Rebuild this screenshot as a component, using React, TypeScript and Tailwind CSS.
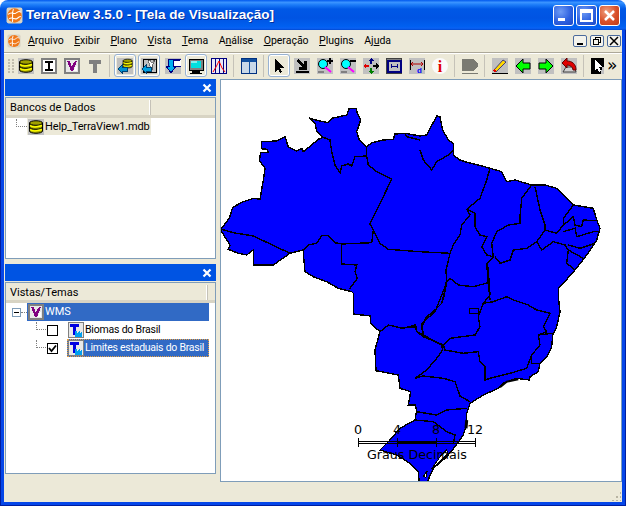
import type { ReactNode } from "react";

const ui = "font-['Roboto',sans-serif] text-[11px] text-black";

// map was traced from 3x crops, so points are crop coords with a crop origin
const at = (ox: number, oy: number, s: string) =>
  s
    .split(" ")
    .map((p) => {
      const [x, y] = p.split(",").map(Number);
      return `${(ox + x / 3).toFixed(1)},${(oy + y / 3).toFixed(1)}`;
    })
    .join(" ");

const outline = [
  at(220, 90, "5,415 8,410 28,385 38,352 70,335 100,325 120,328 130,270 135,235 118,212 122,188 145,187 140,178 124,176 124,155 170,153 195,140 205,170 230,183 245,175 250,185 275,165 295,148 310,142 290,125 285,100 268,84 295,92 325,98 335,85 380,75 388,55 408,55 412,70 422,90 410,125 418,150 440,170 455,158 490,150 520,148 525,132 555,130"),
  at(420, 100, "0,108 20,105 50,48 60,50 68,90 85,120 100,130 100,165 120,180 145,188 175,195 210,205 245,215 260,245 285,240 335,255 375,255 410,265 440,295 460,315 520,325 530,360 540,385 530,420 500,465 465,510 430,550 415,565"),
  at(400, 220, "475,230 480,275 470,320 458,345 455,380 440,410 420,430 415,455 390,470 388,480"),
  at(300, 280, "650,295 610,310 595,325 550,345 510,370 500,400 498,440 490,465 465,500 440,530 400,565 380,610 358,610 355,575 330,550 290,525 240,510 270,480 300,445 345,420 350,390 345,375 325,375 332,335 300,325 295,285 228,272 225,210 240,155 212,130 212,108 160,102 160,40"),
  at(300, 150, "155,425 115,415 80,395 40,380 15,365 10,310"),
  at(220, 90, "250,480 210,490 160,525 100,525 100,480 80,495 55,490 25,478 30,465 5,425"),
].join(" ");

const borders = [
  at(220, 90, "310,142 330,150 335,185 345,225 360,248 365,228 385,222 395,228 405,200 438,198"),
  at(220, 90, "440,170 440,200 445,225 470,245 515,268 450,402 460,420 455,458 365,462 345,458 325,437 305,437 290,460 265,465 250,480"),
  at(220, 90, "365,462 365,522 410,525 405,545 412,565 388,598"),
  at(220, 90, "5,418 40,428 100,438 210,490"),
  at(220, 90, "460,420 480,460 505,478 600,485"),
  at(220, 90, "555,130 560,140 600,150"),
  at(420, 100, "0,150 10,180 35,210 50,185 85,165 100,150"),
  at(420, 100, "210,205 200,240 180,295 140,328 165,340 165,380 180,405 200,410 185,440 200,465 220,470"),
  at(420, 100, "140,328 150,345 125,375 120,405 100,435 90,460 78,510 80,545 70,600"),
  at(420, 100, "0,455 90,460"),
  at(420, 100, "80,545 90,535 115,555 160,560 205,548 210,600"),
  at(420, 100, "335,255 305,295 300,350 300,370 265,375 230,395 215,430 220,470 200,490 205,548"),
  at(420, 100, "345,260 360,330 375,375 375,390 410,400 430,375 430,355 460,315"),
  at(420, 100, "375,390 350,425 320,445 280,450 270,480 240,490 225,470"),
  at(420, 100, "350,425 365,450 400,425 435,435 445,450 490,475"),
  at(420, 100, "430,395 465,385 470,410 520,395 535,395"),
  at(420, 100, "425,380 460,350 465,375 485,380 490,360 530,362"),
  at(420, 100, "445,435 480,445 525,430"),
  at(420, 100, "445,450 440,490 465,510"),
  at(400, 220, "265,150 270,225 250,250 235,290 240,320 225,345 150,355 130,375"),
  at(400, 220, "250,250 280,245 320,230 340,240 385,255 410,270 450,280 430,320 440,335 415,345 420,375 395,405 380,445 330,460 270,475 255,480 255,440 240,425 235,395 190,400 135,390 130,375"),
  at(400, 220, "208,265 235,265 235,280 208,280 208,265"),
  at(400, 220, "415,345 458,340"),
  at(400, 220, "395,405 395,430 420,430"),
  at(400, 220, "150,100 138,150 140,190 125,250 105,270 80,290 65,320 70,350 130,375"),
  at(400, 220, "0,325 50,320 50,335 70,350"),
  at(400, 220, "280,110 262,130 265,150"),
  at(300, 280, "345,295 370,288 430,295 465,305 480,348 510,365"),
  at(300, 280, "345,295 380,270 410,235 428,210"),
  at(300, 280, "428,210 425,195 370,165 365,130 405,95 435,20 440,0"),
  at(300, 280, "240,155 265,135 310,145 345,135 350,155 370,165"),
  at(300, 280, "350,395 410,405 440,390 500,385"),
  at(300, 280, "345,420 400,425 440,455 465,465 460,490"),
];

function BrazilMap() {
  return (
    <svg className="block" width={400} height={401} viewBox="221 80 400 401">
      <polygon points={outline} fill="#0000ff" stroke="#000" strokeWidth={1.4} shapeRendering="crispEdges" />
      {borders.map((b, i) => (
        <polyline key={i} points={b} fill="none" stroke="#000" strokeWidth={1.4} shapeRendering="crispEdges" />
      ))}
      <polygon points={at(300, 280, "400,560 420,530 440,510 445,520 420,545 395,567")} fill="#fff" stroke="#000" shapeRendering="crispEdges" />
      <polygon points={at(300, 280, "370,590 382,572 378,592")} fill="#fff" stroke="#000" shapeRendering="crispEdges" />
      <polyline points={at(300, 280, "600,322 620,305 655,298")} fill="none" stroke="#000" strokeWidth={2} />
      <polyline points={at(300, 280, "500,420 498,445")} fill="none" stroke="#000" strokeWidth={3} />
      {/* scale bar */}
      <g shapeRendering="crispEdges" stroke="#000">
        <path d="M358 441.5H475M358 443.5H475M397 442.5H437M358.5 438V447M397.5 438V447M436.5 438V447M475.5 438V447" fill="none" />
      </g>
      <g fontFamily="'DejaVu Sans', sans-serif" fontSize={12.7} fill="#000">
        <text x={354} y={434}>0</text>
        <text x={393} y={434}>4</text>
        <text x={432} y={434}>8</text>
        <text x={467} y={434}>12</text>
        <text x={367} y={459}>Graus Decimais</text>
      </g>
    </svg>
  );
}

function Ico({ children, bg = true }: { children: ReactNode; bg?: boolean }) {
  return (
    <svg width={16} height={16} viewBox="0 0 16 16" className="block shrink-0" shapeRendering="crispEdges">
      {bg && <rect width={16} height={16} fill="#c0c0c0" />}
      {children}
    </svg>
  );
}

const DbDiscs = () => (
  <g stroke="#000" fill="#ffff00" shapeRendering="auto">
    <path d="M1.5 4c0-3 13-3 13 0v8c0 3-13 3-13 0z" fill="#a0a000" />
    <path d="M1.5 4c0 3 13 3 13 0" fill="none" />
    <path d="M1.5 8c0 3 13 3 13 0" fill="none" />
    <path d="M2 6.5c2 1.500 6 2 12 0M2 10.500c2 1.500 6 2 12 0" fill="none" stroke="#ffff00" strokeWidth={1.5} />
  </g>
);

const IconDb = () => (
  <Ico><DbDiscs /></Ico>
);
const IconI = () => (
  <Ico>
    <rect width={16} height={16} fill="#808080" />
    <rect x={2} y={2} width={12} height={12} fill="#fff" />
    <path d="M4 3h8v2h-3v6h3v2H4v-2h3V5H4z" fill="#000" />
  </Ico>
);
const IconV = () => (
  <Ico>
    <rect width={16} height={16} fill="#808080" />
    <rect x={2} y={2} width={12} height={12} fill="#e8e8e8" />
    <path d="M3 3h3l2 6 1-3 2-3h2l-4 10H7z" fill="#800080" />
    <path d="M11 9l2-1v5h-3z" fill="#fff" />
  </Ico>
);
const IconT = () => <Ico bg={false}><path d="M2 2h12v4h-4v9H6V6H2z" fill="#808080" /></Ico>;
const IconTheme = () => (
  <Ico>
    <rect width={16} height={16} fill="#808080" />
    <rect x={1} y={1} width={14} height={14} fill="#e8e8e8" />
    <path d="M2 2h9v3H8v8H5V5H2z" fill="#0000e0" />
    <path d="M7 9h2l1 3 1-3h1l1 3 1-3v6h-7z" fill="#00a0f0" />
  </Ico>
);
const IconDbIn = () => (
  <Ico>
    <g transform="translate(5 0) scale(.7)"><DbDiscs /></g>
    <path d="M1 11l4-4v2h5v4H5v2z" fill="#0090d0" stroke="#004070" />
  </Ico>
);
const IconDbOut = () => (
  <Ico>
    <path d="M2 1h13v13H2z" fill="#c0c0c0" stroke="#000" />
    <path d="M7 2h2l2 3 2-3h1l-3 6v4h-2V8z" fill="#fff" stroke="#000" strokeWidth={0.5} />
    <path d="M1 11l4-4v2h5v4H5v2z" fill="#00a0e0" stroke="#004070" />
  </Ico>
);
const IconDown = () => (
  <Ico>
    <rect x={7} y={1} width={9} height={7} fill="#fff" stroke="#000080" />
    <rect x={8} y={2} width={7} height={1} fill="#000080" />
    <path d="M3 1h5v7h3l-5 7-5-7h3z" fill="#00b0f0" stroke="#000080" />
  </Ico>
);
const IconMonitor = () => (
  <Ico bg={false}>
    <rect x={1} y={1} width={14} height={11} fill="#808080" stroke="#000" />
    <rect x={3} y={3} width={10} height={7} fill="#00e0e0" />
    <path d="M3 3h6v2H3z" fill="#80f0f0" />
    <path d="M4 13h8v2H4z" fill="#000" />
    <path d="M2 15h12" stroke="#000" />
  </Ico>
);
const IconChart = () => (
  <Ico>
    <rect width={16} height={16} fill="#000080" />
    <rect x={1} y={1} width={14} height={14} fill="#e8e8f8" />
    <path d="M4 1v14M8 1v14M12 1v14" stroke="#000080" />
    <path d="M2 14l3-5 3-6 3 7 3 4" stroke="#f00" fill="none" shapeRendering="auto" />
  </Ico>
);
const IconPanes = () => (
  <Ico>
    <rect x={0.5} y={0.5} width={15} height={15} fill="#c8d8e8" stroke="#003080" />
    <rect x={1} y={1} width={14} height={3} fill="#1050a0" />
    <path d="M8 4v11" stroke="#1050a0" />
  </Ico>
);
const IconPointer = () => <Ico bg={false}><path d="M4 1v13l3-3 2 4 2-1-2-4h4z" fill="#000" /></Ico>;
const IconCorner = () => (
  <Ico>
    <path d="M2 3l2-2 6 6V3h3v9H5V9h4zM2 13h13v2H2z" fill="#000" />
  </Ico>
);
const IconZoom = ({ plus }: { plus: boolean }) => (
  <Ico>
    <circle cx={6} cy={6} r={4.5} fill="#00ffff" stroke="#000" shapeRendering="auto" />
    <path d="M8 9l6 5" stroke="#ff00ff" strokeWidth={2} shapeRendering="auto" />
    <path d="M1 14h6" stroke="#808080" strokeWidth={2} />
    {plus ? <path d="M10 3h6M13 0v6" stroke="#000" strokeWidth={1.500} /> : <path d="M10 3h6" stroke="#000" strokeWidth={1.500} />}
  </Ico>
);
const IconPan = () => (
  <Ico>
    <path d="M8 0l3 3H9v3H7V3H5z" fill="#000080" />
    <path d="M0 8l3-3v2h3v2H3v2z" fill="#e00000" />
    <path d="M16 8l-3-3v2h-3v2h3v2z" fill="#000" />
    <path d="M8 16l3-3H9v-3H7v3H5z" fill="#008000" />
  </Ico>
);
const IconFrame = () => (
  <Ico>
    <rect x={0.5} y={0.5} width={15} height={15} fill="#808080" stroke="#404040" />
    <rect x={1.500} y={2.500} width={13} height={11} fill="#c0c0c0" stroke="#000080" strokeWidth={2} />
    <path d="M5 8h6M5 6v4M11 6v4" stroke="#000080" />
  </Ico>
);
const IconMeasure = () => (
  <Ico>
    <path d="M1 2v10M15 2v10" stroke="#000" />
    <path d="M2 6h12M4 4l-2 2 2 2M12 4l2 2-2 2" stroke="#b00000" fill="none" shapeRendering="auto" />
    <text x={8} y={15} fontSize={8} fontWeight={700} fontFamily="'Liberation Sans', sans-serif" fill="#0000ff">d</text>
  </Ico>
);
const IconInfo = () => (
  <Ico bg={false}>
    <circle cx={8} cy={8} r={8} fill="#fafafa" shapeRendering="auto" />
    <text x={8} y={13.500} textAnchor="middle" fontSize={16} fontWeight={700} fontFamily="'Liberation Serif', serif" fill="#e00000">i</text>
  </Ico>
);
const IconLegend = () => (
  <Ico bg={false}>
    <path d="M0 1h9c4 0 7 3 7 6s-3 6-7 6H0z" fill="#7a7a72" />
    <path d="M0 15h16" stroke="#7a7a72" />
  </Ico>
);
const IconPencil = () => (
  <Ico>
    <path d="M2 12l9-10 3 2-10 10z" fill="#ffd800" stroke="#000080" strokeWidth={0.7} shapeRendering="auto" />
    <path d="M2 12l2 2" stroke="#e00000" strokeWidth={2} />
    <path d="M0 15h16" stroke="#000" />
  </Ico>
);
const IconArrow = ({ flip }: { flip?: boolean }) => (
  <Ico>
    <path d={flip ? "M15 8L8 1v4H1v6h7v4z" : "M1 8l7-7v4h7v6H8v4z"} fill="#00ff00" stroke="#000" shapeRendering="auto" />
  </Ico>
);
const IconUndo = () => (
  <Ico>
    <path d="M2 14l3-5h8l2 5z" fill="#d0d0d0" stroke="#404040" shapeRendering="auto" />
    <path d="M1 5l5-5v3c5 0 9 3 9 9l-3 0c0-3-3-5-6-5v3z" fill="#e00000" stroke="#600000" shapeRendering="auto" />
  </Ico>
);
const IconSelect = () => (
  <Ico bg={false}>
    <rect x={0} y={0} width={13} height={16} fill="#000" />
    <path d="M4 2v10l2-2 2 4 2-1-2-4h3z" fill="#fff" />
    <path d="M11 9h2v7h-3z" fill="#c0c0c0" />
  </Ico>
);

function Tool({ raised, children, cls = "" }: { raised?: boolean; children: ReactNode; cls?: string }) {
  return (
    <div className={`w-[23px] h-[23px] flex items-center justify-center ${cls}`}>
      {raised ? (
        <div className="w-[22px] h-[23px] flex items-center justify-center rounded-[3px] border border-[#98b2d2] bg-[#ece9d8] shadow-[inset_0_0_0_1px_#fff]">
          {children}
        </div>
      ) : (
        children
      )}
    </div>
  );
}

function Sep() {
  return (
    <div className="w-[7px] h-[22px] flex justify-center">
      <div className="w-[1px] h-full bg-[#c5c2b8]" />
    </div>
  );
}

function Logo({ size }: { size: number }) {
  return (
    <svg width={size} height={size} viewBox="0 0 16 16" className="block shrink-0">
      <rect x={0.5} y={0.5} width={15} height={15} rx={2} fill="#d9d4c4" />
      <circle cx={8} cy={8} r={6.8} fill="#f07818" />
      <path d="M2 7c3-3 5 0 7-1s3-3 5-1M3 11c3-2 5 1 7 0s2-2 4-2M7 2c-2 4 0 8-1 12" fill="none" stroke="#fff" strokeWidth={1} />
    </svg>
  );
}

function WinButton({ kind }: { kind: "min" | "max" | "close" }) {
  const bg =
    kind === "close"
      ? "bg-[radial-gradient(circle_at_35%_30%,#f0a080,#d8502a_55%,#c03c18)]"
      : "bg-[radial-gradient(circle_at_35%_30%,#6f9cf5,#2f62e0_55%,#1c48c8)]";
  return (
    <div className={`w-[21px] h-[21px] rounded-[3px] border border-white flex items-center justify-center ${bg}`}>
      <svg width={15} height={15} viewBox="0 0 15 15" shapeRendering="crispEdges">
        {kind === "min" && <rect x={2} y={10} width={7} height={3} fill="#fff" />}
        {kind === "max" && <path d="M2 2h11v11H2zM2 4h11" fill="none" stroke="#fff" strokeWidth={1.500} />}
        {kind === "close" && <path d="M3 3l9 9M12 3l-9 9" stroke="#fff" strokeWidth={2.500} shapeRendering="auto" />}
      </svg>
    </div>
  );
}

function MdiButton({ children }: { children: ReactNode }) {
  return (
    <div className="w-[14px] h-[12px] rounded-[2px] border border-[#4a6a9c] bg-[#f4f3ec] flex items-center justify-center">
      <svg width={10} height={10} viewBox="0 0 10 10" shapeRendering="crispEdges">
        {children}
      </svg>
    </div>
  );
}

function PanelTitle() {
  return (
    <div className="h-[17px] bg-[#0054e3] flex items-center justify-end pr-[4px]">
      <svg width={10} height={10} viewBox="0 0 10 10">
        <path d="M1.500 1.500l7 7M8.500 1.500l-7 7" stroke="#fff" strokeWidth={2.200} />
      </svg>
    </div>
  );
}

function ListHeader({ label, w }: { label: string; w: string }) {
  return (
    <div className="h-[20px] bg-[#ece9d8] border-b-[3px] border-[#d8d4c4] flex items-center pt-[1px]">
      <div className={`${w} h-[15px] pl-[4px] border-r-[1px] border-[#fff] leading-[15px] shadow-[1px_0_0_#c5c2b8]`}>{label}</div>
    </div>
  );
}

const menus: [string, string, string][] = [
  ["", "A", "rquivo"],
  ["", "E", "xibir"],
  ["", "P", "lano"],
  ["", "V", "ista"],
  ["", "T", "ema"],
  ["A", "n", "álise"],
  ["", "O", "peração"],
  ["", "P", "lugins"],
  ["Aj", "u", "da"],
];

export default function App() {
  return (
    <div className={`w-[626px] h-[506px] flex flex-col overflow-hidden bg-white ${ui}`}>
      {/* title bar */}
      <div className="h-[30px] shrink-0 rounded-t-[8px] flex items-center pl-[6px] pr-[6px] bg-[linear-gradient(to_bottom,#0058ee_0%,#3a93ff_8%,#1c7cf8_16%,#0058e6_30%,#0054e3_60%,#0060f0_88%,#0a62f5_94%,#0048d0_100%)]">
        <Logo size={17} />
        <span className="ml-[3px] flex-1 font-['Liberation_Sans',sans-serif] font-bold text-[13.500px] text-white [text-shadow:1px_1px_0_#0030a0]">
          TerraView 3.5.0 - [Tela de Visualização]
        </span>
        <div className="flex gap-[2px]">
          <WinButton kind="min" />
          <WinButton kind="max" />
          <WinButton kind="close" />
        </div>
      </div>

      <div className="flex-1 flex flex-col border-x border-b border-[#001ea0]">
        <div className="flex-1 flex flex-col bg-[#ece9d8] border-x-[3px] border-b-[3px] border-[#0546e8]">
          {/* menu */}
          <div className="h-[22px] shrink-0 flex items-center pl-[3px] pr-[1px]">
            <Logo size={14} />
            <div className="ml-[7px] flex gap-[10.500px] text-[10.500px]">
              {menus.map(([a, b, c]) => (
                <span key={a + b + c}>
                  {a}
                  <span className="underline">{b}</span>
                  {c}
                </span>
              ))}
            </div>
            <div className="ml-auto flex gap-[3px]">
              <MdiButton><rect x={2} y={7} width={6} height={2} fill="#000" /></MdiButton>
              <MdiButton><path d="M3.500 3.500V1.500H8.500V6.500H6.500M1.500 3.500H6.500V8.500H1.500Z" fill="none" stroke="#000" /></MdiButton>
              <MdiButton><path d="M1 1l8 8M9 1l-8 8" stroke="#000" strokeWidth={1.500} shapeRendering="auto" /></MdiButton>
            </div>
          </div>

          {/* toolbar */}
          <div className="h-[26px] shrink-0 border-t border-[#aca899] flex items-center shadow-[inset_0_1px_0_#fff]">
            <div className="w-[6px] ml-[4px] grid grid-cols-2 gap-x-[1px] gap-y-[1px]">
              {[0, 1, 2, 3, 4, 5, 6, 7, 8, 9].map((i) => (
                <div key={i} className="w-[2px] h-[2px] bg-[#c1bdae]" />
              ))}
            </div>
            <Tool><IconDb /></Tool>
            <Tool><IconI /></Tool>
            <Tool><IconV /></Tool>
            <Tool><IconT /></Tool>
            <Sep />
            <Tool raised cls="mr-[1px]"><IconDbIn /></Tool>
            <Tool raised cls="mr-[1px]"><IconDbOut /></Tool>
            <Tool><IconDown /></Tool>
            <Tool raised><IconMonitor /></Tool>
            <Tool><IconChart /></Tool>
            <Sep />
            <Tool><IconPanes /></Tool>
            <Sep />
            <Tool raised><IconPointer /></Tool>
            <Tool><IconCorner /></Tool>
            <Tool><IconZoom plus /></Tool>
            <Tool><IconZoom plus={false} /></Tool>
            <Tool><IconPan /></Tool>
            <Tool><IconFrame /></Tool>
            <Tool><IconMeasure /></Tool>
            <Tool><IconInfo /></Tool>
            <Sep />
            <Tool><IconLegend /></Tool>
            <Sep />
            <Tool><IconPencil /></Tool>
            <Tool><IconArrow /></Tool>
            <Tool><IconArrow flip /></Tool>
            <Tool><IconUndo /></Tool>
            <Sep />
            <Tool><IconSelect /></Tool>
            <span className="ml-[-3px] text-[17px] leading-none font-['DejaVu_Sans',sans-serif]">»</span>
          </div>

          {/* body */}
          <div className="flex-1 flex items-start pl-[1px] pt-[1px] gap-[4px]">
            <div className="w-[211px] flex flex-col">
              <PanelTitle />
              <div className="h-[162px] border border-[#7f9db9] bg-white mt-[1px]">
                <ListHeader label="Bancos de Dados" w="w-[144px]" />
                <div className="flex items-center pl-[10px] h-[17px]">
                  <div className="w-[11px] h-[8px] -mt-[8px] border-l border-b border-dotted border-[#808080] shrink-0" />
                  <div className="flex items-center bg-[#ece9d8] pl-[1px] pr-[1px]">
                    <IconDb />
                    <span className="leading-[17px] ml-[1px] tracking-[-0.15px]">Help_TerraView1.mdb</span>
                  </div>
                </div>
              </div>

              <div className="mt-[5px]">
                <PanelTitle />
              </div>
              <div className="h-[192px] border border-[#7f9db9] bg-white mt-[1px]">
                <ListHeader label="Vistas/Temas" w="w-[201px]" />
                <div className="flex items-center pl-[6px] h-[18px]">
                  <div className="w-[9px] h-[9px] border border-[#7f9db9] bg-white flex items-center justify-center shrink-0">
                    <div className="w-[5px] h-[1px] bg-black" />
                  </div>
                  <div className="w-[6px] border-b border-dotted border-[#808080]" />
                  <div className="flex-1 flex items-center bg-[#316ac5] mr-[6px] h-[18px] text-white">
                    <div className="ml-[1px]"><IconV /></div>
                    <span className="ml-[1px]">WMS</span>
                  </div>
                </div>
                <div className="flex items-center pl-[30px] h-[18px]">
                  <div className="w-[10px] h-[8px] -mt-[8px] border-l border-b border-dotted border-[#808080]" />
                  <div className="w-[11px] h-[11px] ml-[1px] border border-black bg-white" />
                  <div className="ml-[10px]"><IconTheme /></div>
                  <span className="ml-[1px] text-[10.500px] tracking-[-0.2px]">Biomas do Brasil</span>
                </div>
                <div className="flex items-center pl-[30px] h-[18px]">
                  <div className="w-[10px] h-[8px] -mt-[8px] border-l border-b border-dotted border-[#808080]" />
                  <div className="w-[11px] h-[11px] ml-[1px] border border-black bg-white flex items-center justify-center">
                    <svg width={9} height={9} viewBox="0 0 9 9"><path d="M1 4l2.500 3L8 1.500" fill="none" stroke="#000" strokeWidth={1.800} /></svg>
                  </div>
                  <div className="ml-[9px] flex-1 min-w-0 mr-[6px] h-[18px] flex items-center bg-[#316ac5] outline-1 outline-dotted outline-[#e8a040] -outline-offset-1 text-white whitespace-nowrap pl-[1px]">
                    <IconTheme />
                    <span className="ml-[1px] text-[10.500px] tracking-[-0.25px]">Limites estaduais do Brasil</span>
                  </div>
                </div>
              </div>
            </div>

            <div className="w-[402px] h-[403px] border border-[#7f9db9] bg-white">
              <BrazilMap />
            </div>
          </div>

          {/* resize grip */}
          <div className="h-0 relative">
            <div className="absolute right-[1px] bottom-[1px] w-[10px] h-[10px] bg-[radial-gradient(#b8b4a2_1px,transparent_1.2px)] bg-[length:4px_4px] [clip-path:polygon(100%_0,100%_100%,0_100%)]" />
          </div>
        </div>
      </div>
    </div>
  );
}
